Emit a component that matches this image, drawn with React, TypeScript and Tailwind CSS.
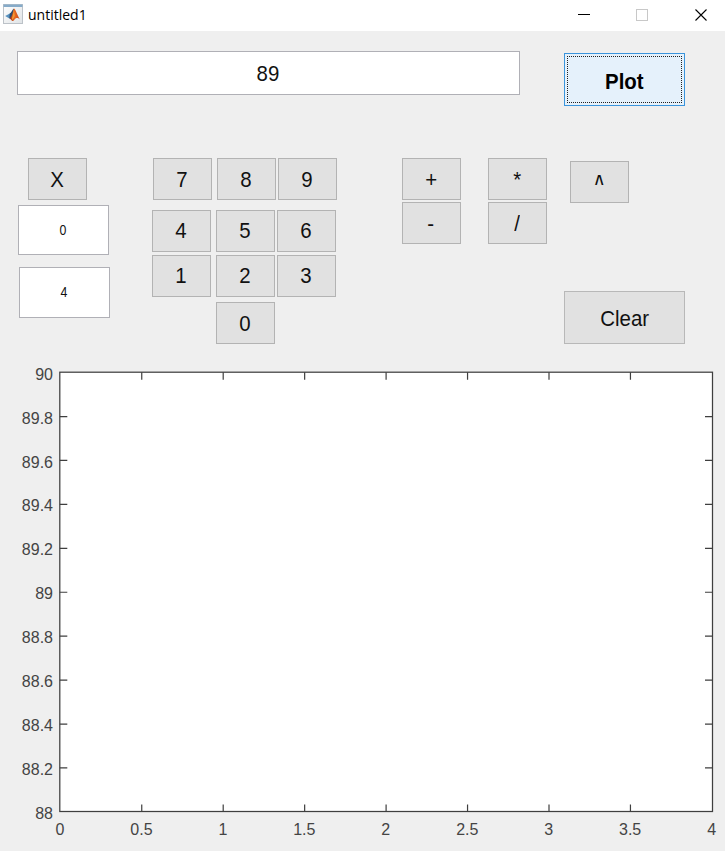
import type { ReactNode } from "react";

function Key({ children, className = "" }: { children: ReactNode; className?: string }) {
  return (
    <button
      type="button"
      className={`flex h-[42px] w-[59px] shrink-0 items-center justify-center border border-[#b3b3b3] bg-[#e1e1e1] pt-[3px] text-[21.5px] leading-none text-[#111] ${className}`}
    >
      <span className="scale-x-95">{children}</span>
    </button>
  );
}

function Field({ children, className }: { children: ReactNode; className: string }) {
  return (
    <div className={`flex shrink-0 items-center justify-center border border-[#b0b0b6] bg-white leading-none text-[#111] ${className}`}>
      {children}
    </div>
  );
}

function MatlabIcon() {
  return (
    <svg width="20" height="20" viewBox="0 0 20 20" className="-mt-[3px] shrink-0">
      <defs>
        <linearGradient id="frame" x1="0" y1="0" x2="1" y2="1">
          <stop offset="0" stopColor="#ffffff" />
          <stop offset="1" stopColor="#dfe3e6" />
        </linearGradient>
        <linearGradient id="peak" x1="0" y1="0" x2="1" y2="0">
          <stop offset="0" stopColor="#a3301a" />
          <stop offset="0.5" stopColor="#ea6a1e" />
          <stop offset="1" stopColor="#c2431c" />
        </linearGradient>
      </defs>
      <rect x="0.5" y="0.5" width="19" height="19" fill="url(#frame)" stroke="#bcc2c8" />
      <rect x="0.5" y="0.5" width="19" height="2.5" fill="#86abc9" />
      <path d="M2.2 12 L6.8 9.6 L9 11.8 L6.3 14.5 Z" fill="#5791bf" />
      <path d="M6.8 9.6 C8.6 8.8 9.3 5.6 11 4.6 L10.2 11 L8 14.7 L6.3 14.5 Z" fill="#2c4a6b" />
      <path d="M11 4.6 C12.8 5.3 14.2 11.5 16.9 15.4 C14.4 13.2 12.9 13.8 11.6 15.4 C10.3 17.2 9.2 17.3 8.7 16.5 L6.7 14.3 C8.7 13.4 9.6 9 11 4.6 Z" fill="url(#peak)" />
      <path d="M11 6 L11.8 12 L9.6 16 L9 14.2 Z" fill="#f39a35" />
    </svg>
  );
}

const xTicks = ["0", "0.5", "1", "1.5", "2", "2.5", "3", "3.5", "4"];
const yTicks = ["90", "89.8", "89.6", "89.4", "89.2", "89", "88.8", "88.6", "88.4", "88.2", "88"];

function Axes() {
  const left = 59.8;
  const right = 712.5;
  const top = 8.2;
  const bottom = 447.5;
  return (
    <svg width="725" height="487" viewBox="0 0 725 487" className="block shrink-0" fontSize="16" fill="#444">
      <rect x={left} y={top} width={right - left} height={bottom - top} fill="#fff" stroke="#3f3f3f" strokeWidth="1.25" />
      {xTicks.map((label, i) => {
        const x = 60 + 81.45 * i;
        return (
          <g key={label}>
            <path d={`M${x + 0.3} ${top}v7.5M${x + 0.3} ${bottom}v-7`} stroke={i % 8 ? "#3f3f3f" : "none"} strokeWidth="1.2" />
            <text x={x} y="471" textAnchor="middle">{label}</text>
          </g>
        );
      })}
      {yTicks.map((label, i) => {
        const y = top + ((bottom - top) * i) / 10;
        return (
          <g key={label}>
            <path d={`M${left} ${y + 0.4}h7.5M${right} ${y + 0.4}h-7.5`} stroke={i % 10 ? "#3f3f3f" : "none"} strokeWidth="1.2" />
            <text x="53" y={y + 7.5} textAnchor="end">{label}</text>
          </g>
        );
      })}
    </svg>
  );
}

export default function App() {
  return (
    <div className="flex h-[851px] w-[725px] flex-col overflow-hidden bg-[#efefef] font-['Liberation_Sans',Arial,sans-serif]">
      <header className="flex h-[31px] shrink-0 items-center bg-white pl-[3px]">
        <MatlabIcon />
        <span className="-mt-px ml-[5px] font-['Open_Sans',sans-serif] text-[14px] leading-none text-black">untitled1</span>
        <svg width="150" height="30" viewBox="0 0 150 30" fill="none" className="mb-px ml-auto">
          <path d="M3 14.5H15" stroke="#000" />
          <rect x="61.5" y="9.5" width="11" height="11" stroke="#c8c8c8" />
          <path d="M120.5 9.5l11 11M131.5 9.5l-11 11" stroke="#000" strokeWidth="1.1" />
        </svg>
      </header>

      <section className="flex h-[127px] shrink-0 items-start">
        <Field className="mt-5 ml-[17px] h-11 w-[503px] pt-[3px] pr-[2px] text-[21.5px]">
          <span className="scale-x-95">89</span>
        </Field>
        <button
          type="button"
          className="mt-[22px] ml-11 flex h-[53px] w-[121px] shrink-0 border border-[#3a94dc] bg-[#e5f1fb] p-[2px] text-[21.5px] leading-none font-bold text-black"
        >
          <span className="flex h-full w-full items-center justify-center border border-dotted border-[#222] pt-[6px]">
            <span className="scale-x-95">Plot</span>
          </span>
        </button>
      </section>

      <section className="flex h-[206px] shrink-0 items-start">
        <div className="ml-[17.5px] flex w-[93px] shrink-0 flex-col">
          <Key className="ml-[10px]">X</Key>
          <Field className="mt-[5px] h-[50px] w-[91px] text-[14.5px]"><span className="scale-x-[0.85]">0</span></Field>
          <Field className="mt-3 ml-px h-[51px] w-[91px] text-[14.5px]"><span className="scale-x-[0.85]">4</span></Field>
        </div>

        <div className="ml-[41px] flex w-[186px] shrink-0 flex-col">
          <div className="ml-[1px] flex">
            <Key>7</Key>
            <Key className="ml-[5px]">8</Key>
            <Key className="ml-[2px]">9</Key>
          </div>
          <div className="mt-[9.5px] flex">
            <Key>4</Key>
            <Key className="ml-[5px]">5</Key>
            <Key className="ml-[2px]">6</Key>
          </div>
          <div className="mt-[3px] flex">
            <Key>1</Key>
            <Key className="ml-[5px]">2</Key>
            <Key className="ml-[2px]">3</Key>
          </div>
          <Key className="mt-[5.5px] ml-16">0</Key>
        </div>

        <div className="ml-16 flex flex-col gap-[2px]">
          <Key>+</Key>
          <Key>-</Key>
        </div>
        <div className="ml-[27px] flex flex-col gap-[2px]">
          <Key>*</Key>
          <Key>/</Key>
        </div>
        <div className="ml-[17px] flex flex-col">
          <Key className="mt-[3px] ml-[6.5px]">
            <span className="block scale-x-75 pt-[3px] font-bold">^</span>
          </Key>
          <button
            type="button"
            className="mt-[88px] flex h-[53px] w-[121px] items-center justify-center border border-[#b8b8b8] bg-[#e1e1e1] pt-[4px] pl-[2px] text-[21.5px] leading-none text-[#111]"
          >
            <span className="scale-x-95">Clear</span>
          </button>
        </div>
      </section>

      <Axes />
    </div>
  );
}
